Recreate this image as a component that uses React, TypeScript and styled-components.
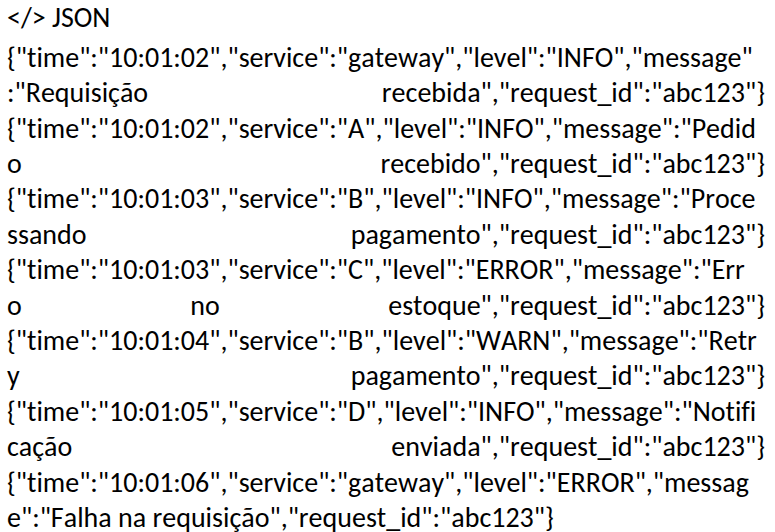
import React from "react";
import styled, { createGlobalStyle } from "styled-components";

const GlobalStyle = createGlobalStyle`
  html, body { margin: 0; padding: 0; background: #ffffff; }
`;

const Page = styled.div`
  width: 775px;
  height: 532px;
  box-sizing: border-box;
  padding: 0 10px 0 7px;
  font-family: Carlito, Calibri, Lato, sans-serif;
  font-size: 28px;
  font-kerning: none;
  font-variant-ligatures: none;
  color: #000000;
  overflow: hidden;
`;

const Title = styled.div`
  line-height: 35.4px;
  height: 39.7px;
`;

const Record = styled.div`
  display: flex;
  flex-direction: column;
`;

const Head = styled.div`
  line-height: 35.4px;
  white-space: nowrap;
`;

const Tail = styled.div<{ $last?: boolean }>`
  line-height: 35.4px;
  white-space: nowrap;
  text-align: justify;
  text-align-last: ${(p) => (p.$last ? "left" : "justify")};
`;

const records: [string, string][] = [
  ['{"time":"10:01:02","service":"gateway","level":"INFO","message"', ':"Requisição recebida","request_id":"abc123"}'],
  ['{"time":"10:01:02","service":"A","level":"INFO","message":"Pedid', 'o recebido","request_id":"abc123"}'],
  ['{"time":"10:01:03","service":"B","level":"INFO","message":"Proce', 'ssando pagamento","request_id":"abc123"}'],
  ['{"time":"10:01:03","service":"C","level":"ERROR","message":"Err', 'o no estoque","request_id":"abc123"}'],
  ['{"time":"10:01:04","service":"B","level":"WARN","message":"Retr', 'y pagamento","request_id":"abc123"}'],
  ['{"time":"10:01:05","service":"D","level":"INFO","message":"Notifi', 'cação enviada","request_id":"abc123"}'],
  ['{"time":"10:01:06","service":"gateway","level":"ERROR","messag', 'e":"Falha na requisição","request_id":"abc123"}'],
];

export default function App() {
  return (
    <>
      <GlobalStyle />
      <Page>
        <Title>{"</> JSON"}</Title>
        {records.map(([head, tail], i) => (
          <Record key={i}>
            <Head>{head}</Head>
            <Tail $last={i === records.length - 1}>{tail}</Tail>
          </Record>
        ))}
      </Page>
    </>
  );
}
